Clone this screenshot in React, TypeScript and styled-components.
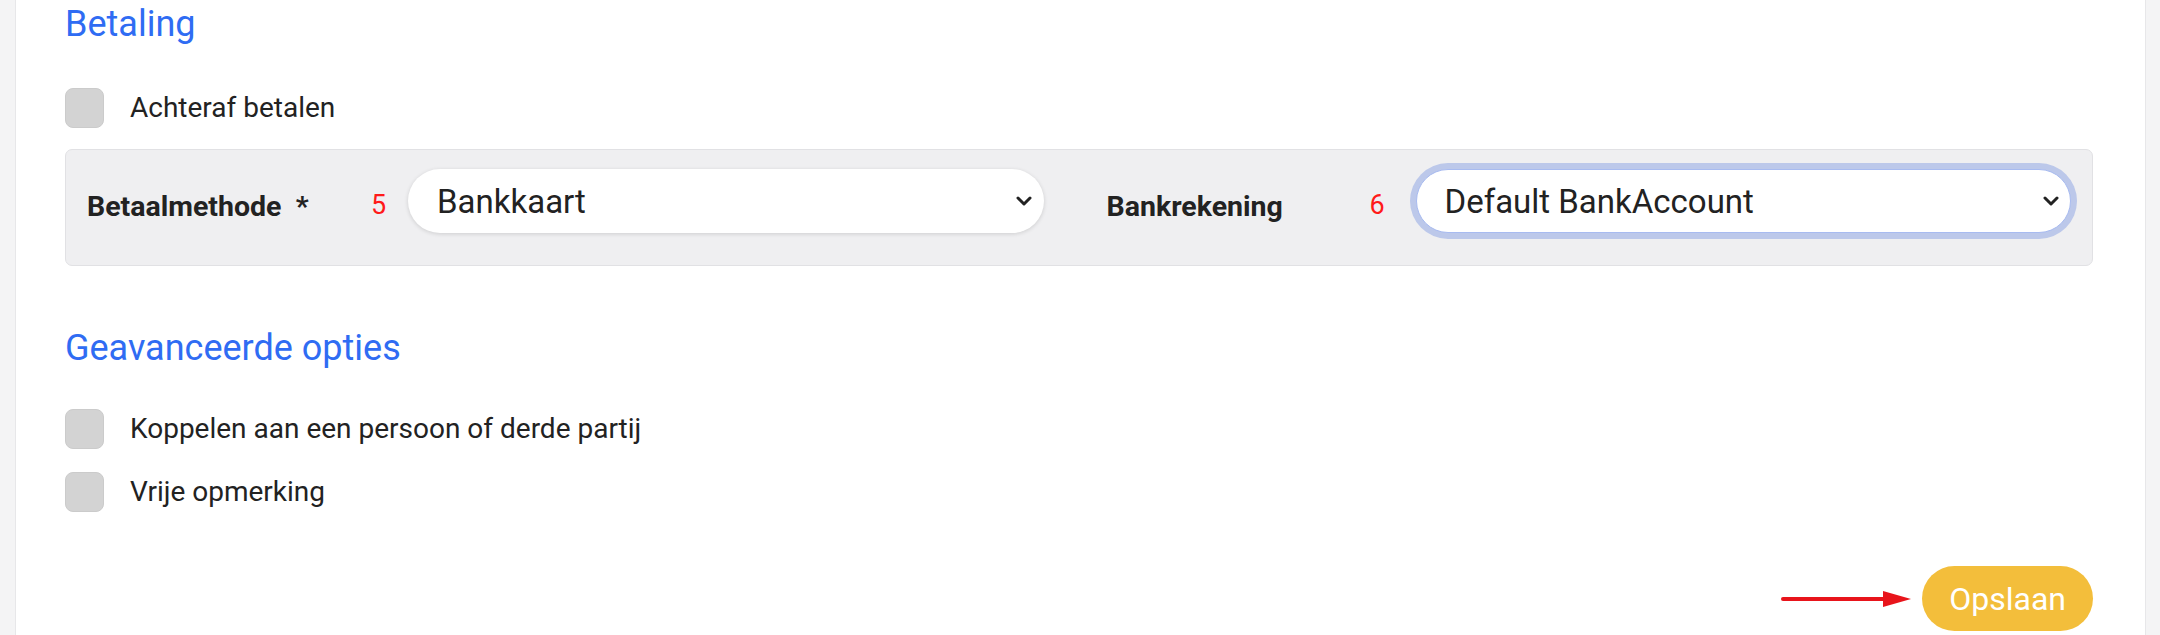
import React from "react";
import styled, { createGlobalStyle } from "styled-components";

const GlobalStyle = createGlobalStyle`
  html, body {
    margin: 0;
    padding: 0;
    background: #f4f4f5;
  }
  body {
    font-family: Roboto, "Noto Sans", "Liberation Sans", sans-serif;
    color: #212529;
  }
`;

const Page = styled.div`
  min-height: 635px;
  padding: 0 14px 0 15px;
  display: flex;
`;

const Card = styled.div`
  flex: 1;
  background: #ffffff;
  border-left: 1px solid #e7e7e9;
  border-right: 1px solid #e7e7e9;
  padding: 3px 52px 4px 49px;
  display: flex;
  flex-direction: column;
`;

const SectionTitle = styled.h5<{ $top?: number }>`
  margin: ${({ $top }) => $top ?? 0}px 0 0;
  font-size: 36px;
  line-height: 42px;
  font-weight: 400;
  color: #2f6cf3;
`;

const CheckRow = styled.label<{ $top: number }>`
  display: flex;
  align-items: center;
  gap: 26px;
  margin-top: ${({ $top }) => $top}px;
  font-size: 28px;
  line-height: 40px;
  color: #222;
`;

const CheckBox = styled.span`
  width: 39px;
  height: 40px;
  box-sizing: border-box;
  border-radius: 8px;
  background: #d3d3d3;
  border: 1px solid #cbcbcb;
  flex-shrink: 0;
`;

const Panel = styled.div`
  margin-top: 21px;
  background: #efeff1;
  border: 1px solid #e1e1e4;
  border-radius: 7px;
  padding: 19px 21px 32px 21px;
  display: grid;
  grid-template-columns: 957fr 965fr;
  column-gap: 63px;
`;

const Field = styled.div<{ $label: number; $num: number }>`
  display: grid;
  grid-template-columns: ${({ $label }) => $label}px ${({ $num }) => $num}px 1fr;
  align-items: center;
`;

const FieldLabel = styled.span`
  font-size: 28.5px;
  font-weight: 700;
  color: #222;
  padding-top: 10px;
`;

const Marker = styled.span`
  font-size: 27px;
  color: #ff1a1a;
  padding-top: 8px;
`;

const SelectWrap = styled.div`
  position: relative;
`;

const Select = styled.select<{ $focused?: boolean }>`
  appearance: none;
  width: 100%;
  height: 64px;
  box-sizing: border-box;
  border-radius: 32px;
  background: #fff;
  font-family: inherit;
  font-size: 33px;
  color: #222;
  padding: 0 50px 0 28px;
  outline: none;
  border: 1px solid ${({ $focused }) => ($focused ? "#a8bbf0" : "transparent")};
  box-shadow: ${({ $focused }) =>
    $focused
      ? "0 0 0 6px rgba(70, 110, 220, 0.3)"
      : "0 1px 4px rgba(0, 0, 0, 0.14)"};
`;

const Chevron = styled.svg`
  position: absolute;
  right: 12px;
  top: 50%;
  margin-top: -5px;
  pointer-events: none;
`;

const Footer = styled.div`
  margin-top: 54px;
  display: flex;
  justify-content: flex-end;
  align-items: center;
  gap: 11px;
`;

const SaveButton = styled.button`
  height: 65px;
  padding: 0 27px;
  border: none;
  border-radius: 33px;
  background: #f3be3b;
  color: #fff;
  font-family: inherit;
  font-size: 32px;
`;

const ChevronIcon = () => (
  <Chevron width="16" height="10" viewBox="0 0 16 10">
    <polyline
      points="2,2 8,8 14,2"
      fill="none"
      stroke="#222"
      strokeWidth="3"
      strokeLinecap="round"
      strokeLinejoin="round"
    />
  </Chevron>
);

const Arrow = () => (
  <svg width="131" height="20" viewBox="0 0 131 20">
    <line x1="3" y1="10" x2="106" y2="10" stroke="#e8141b" strokeWidth="4" strokeLinecap="round" />
    <polygon points="103,2 131,10 103,18" fill="#e8141b" />
  </svg>
);

const options = ["Achteraf betalen"];
const advanced = ["Koppelen aan een persoon of derde partij", "Vrije opmerking"];

export default function App() {
  return (
    <>
      <GlobalStyle />
      <Page>
        <Card>
          <SectionTitle>Betaling</SectionTitle>
          {options.map((o) => (
            <CheckRow key={o} $top={43}>
              <CheckBox />
              {o}
            </CheckRow>
          ))}

          <Panel>
            <Field $label={284} $num={37}>
              <FieldLabel>Betaalmethode&nbsp;&nbsp;*</FieldLabel>
              <Marker>5</Marker>
              <SelectWrap>
                <Select defaultValue="Bankkaart">
                  <option>Bankkaart</option>
                  <option>Contant</option>
                  <option>Overschrijving</option>
                </Select>
                <ChevronIcon />
              </SelectWrap>
            </Field>
            <Field $label={263} $num={46}>
              <FieldLabel>Bankrekening</FieldLabel>
              <Marker>6</Marker>
              <SelectWrap>
                <Select $focused defaultValue="Default BankAccount">
                  <option>Default BankAccount</option>
                </Select>
                <ChevronIcon />
              </SelectWrap>
            </Field>
          </Panel>

          <SectionTitle $top={61}>Geavanceerde opties</SectionTitle>
          {advanced.map((o, i) => (
            <CheckRow key={o} $top={i === 0 ? 40 : 23}>
              <CheckBox />
              {o}
            </CheckRow>
          ))}

          <Footer>
            <Arrow />
            <SaveButton>Opslaan</SaveButton>
          </Footer>
        </Card>
      </Page>
    </>
  );
}
